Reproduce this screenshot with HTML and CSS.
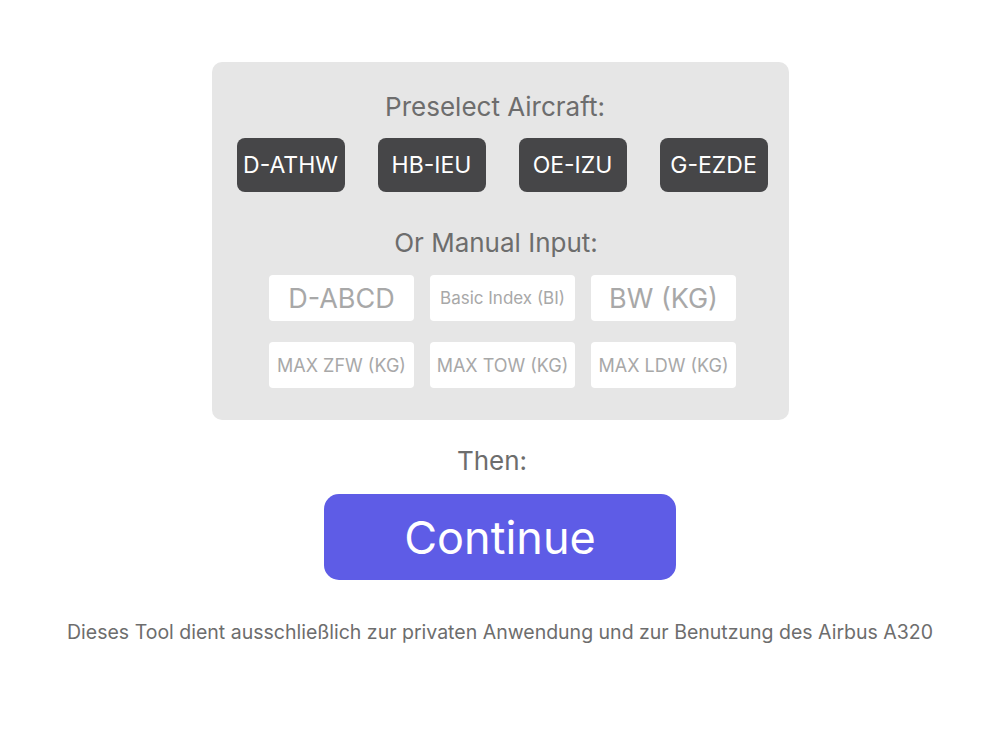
FILE: index.html
```html
<!DOCTYPE html>
<html lang="de">
<head>
  <meta charset="UTF-8" />
  <meta name="viewport" content="width=device-width, initial-scale=1.0"/>
  <title>A320 Weight &amp; Balance</title>
  <link rel="stylesheet" href="styles.css">
</head>
<body>

  <div class="panel">
    <h2 class="label title">Preselect Aircraft:</h2>
    <div class="aircraft">
      <button class="reg">D-ATHW</button>
      <button class="reg">HB-IEU</button>
      <button class="reg">OE-IZU</button>
      <button class="reg">G-EZDE</button>
    </div>

    <h2 class="label manual">Or Manual Input:</h2>
    <div class="inputs">
      <input class="big" type="text" placeholder="D-ABCD">
      <input class="small" type="text" placeholder="Basic Index (BI)">
      <input class="big" type="text" placeholder="BW (KG)">
      <input type="text" placeholder="MAX ZFW (KG)">
      <input type="text" placeholder="MAX TOW (KG)">
      <input type="text" placeholder="MAX LDW (KG)">
    </div>
  </div>

  <h2 class="label then">Then:</h2>
  <button class="continue">Continue</button>

  <p class="note">Dieses Tool dient ausschließlich zur privaten Anwendung und zur Benutzung des Airbus A320</p>

</body>
</html>
```

FILE: styles.css
```css
body {
  margin: 0;
  padding-top: 62px;
  font-family: Inter, "Noto Sans", sans-serif;
  background: #fff;
  display: flex;
  flex-direction: column;
  align-items: center;
}
.panel {
  width: 577px;
  box-sizing: border-box;
  background: #e6e6e6;
  border-radius: 10px;
  padding: 28px 0 32px 0;
  display: flex;
  flex-direction: column;
  align-items: center;
}
.label {
  margin: 0;
  font-size: 26px;
  font-weight: 400;
  color: #6d6d6d;
  line-height: 34px;
}
.title {
  margin-right: 10px;
}
.aircraft {
  display: flex;
  gap: 33px;
  margin-top: 14px;
  margin-left: 4px;
}
.reg {
  width: 108px;
  height: 54px;
  border: none;
  border-radius: 8px;
  background: #464648;
  color: #fff;
  font-family: inherit;
  font-size: 23px;
  padding: 0;
}
.manual {
  margin-top: 34px;
  margin-right: 8px;
}
.inputs {
  display: grid;
  grid-template-columns: repeat(3, 145px);
  column-gap: 16px;
  row-gap: 21px;
  margin-top: 15px;
  margin-left: 5px;
}
.inputs input {
  height: 46px;
  box-sizing: border-box;
  border: none;
  border-radius: 4px;
  background: #fff;
  text-align: center;
  font-family: inherit;
  font-size: 18px;
  padding: 0;
  outline: none;
}
.inputs input::placeholder {
  color: #a8a8a8;
}
.inputs input.big {
  font-size: 27px;
}
.inputs input.small {
  font-size: 17px;
}
.then {
  margin-top: 24px;
  margin-right: 16px;
}
.continue {
  margin-top: 16px;
  width: 352px;
  height: 86px;
  border: none;
  border-radius: 15px;
  background: #5e5ce6;
  color: #fff;
  font-family: inherit;
  font-size: 45px;
  padding: 0;
}
.note {
  margin: 40px 0 0 0;
  font-size: 19.5px;
  color: #6d6d6d;
}
```
